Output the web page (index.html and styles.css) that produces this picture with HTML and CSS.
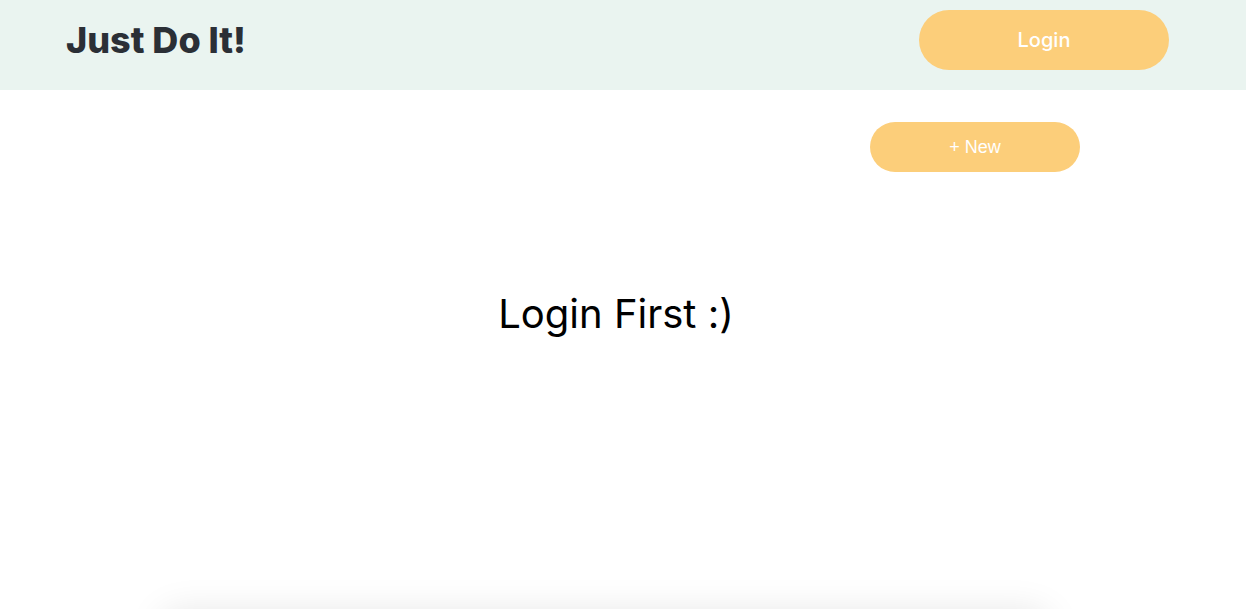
FILE: index.html
```html
<!DOCTYPE html>
<html lang="en">
<head>
<meta charset="utf-8">
<title>Just Do It!</title>
<link rel="stylesheet" href="styles.css">
</head>
<body>
<header class="topbar">
  <h1 class="brand">Just Do It!</h1>
  <button class="btn btn-login">Login</button>
</header>
<main class="main">
  <div class="actions">
    <button class="btn btn-new">+ New</button>
  </div>
  <p class="message">Login First :)</p>
  <div class="card"></div>
</main>
</body>
</html>
```

FILE: styles.css
```css
* { box-sizing: border-box; }
html, body { margin: 0; padding: 0; }
body {
  background: #ffffff;
  font-family: "Inter", "Noto Sans", sans-serif;
  overflow: hidden;
  height: 609px;
}
.topbar {
  height: 90px;
  background: #eaf4f0;
  display: flex;
  align-items: flex-start;
  justify-content: space-between;
  padding: 10px 77px 0 66px;
}
.brand {
  margin: 0;
  font-size: 36px;
  line-height: 60px;
  font-weight: 800;
  color: #2b2f36;
  letter-spacing: 0;
}
.btn {
  border: none;
  background: #fcce7a;
  color: #ffffff;
  cursor: pointer;
}
.btn-login {
  width: 250px;
  height: 60px;
  border-radius: 30px;
  font-family: "Inter", "Noto Sans", sans-serif;
  font-size: 20px;
  font-weight: 500;
}
.main {
  width: 914px;
  margin: 0 auto;
  display: flex;
  flex-direction: column;
}
.actions {
  display: flex;
  justify-content: flex-end;
  padding-top: 32px;
}
.btn-new {
  width: 210px;
  height: 50px;
  border-radius: 25px;
  font-family: "Liberation Sans", sans-serif;
  font-size: 18px;
  font-weight: 300;
}
.message {
  margin: 113px 0 0;
  text-align: center;
  font-size: 40px;
  font-weight: 400;
  color: #000;
  line-height: 58px;
  padding-right: 14px;
}
.card {
  margin: 268px 0 0 -6px;
  width: 890px;
  height: 60px;
  background: #fff;
  border-radius: 20px;
  box-shadow: 0 0 36px rgba(0,0,0,0.1);
}
```
